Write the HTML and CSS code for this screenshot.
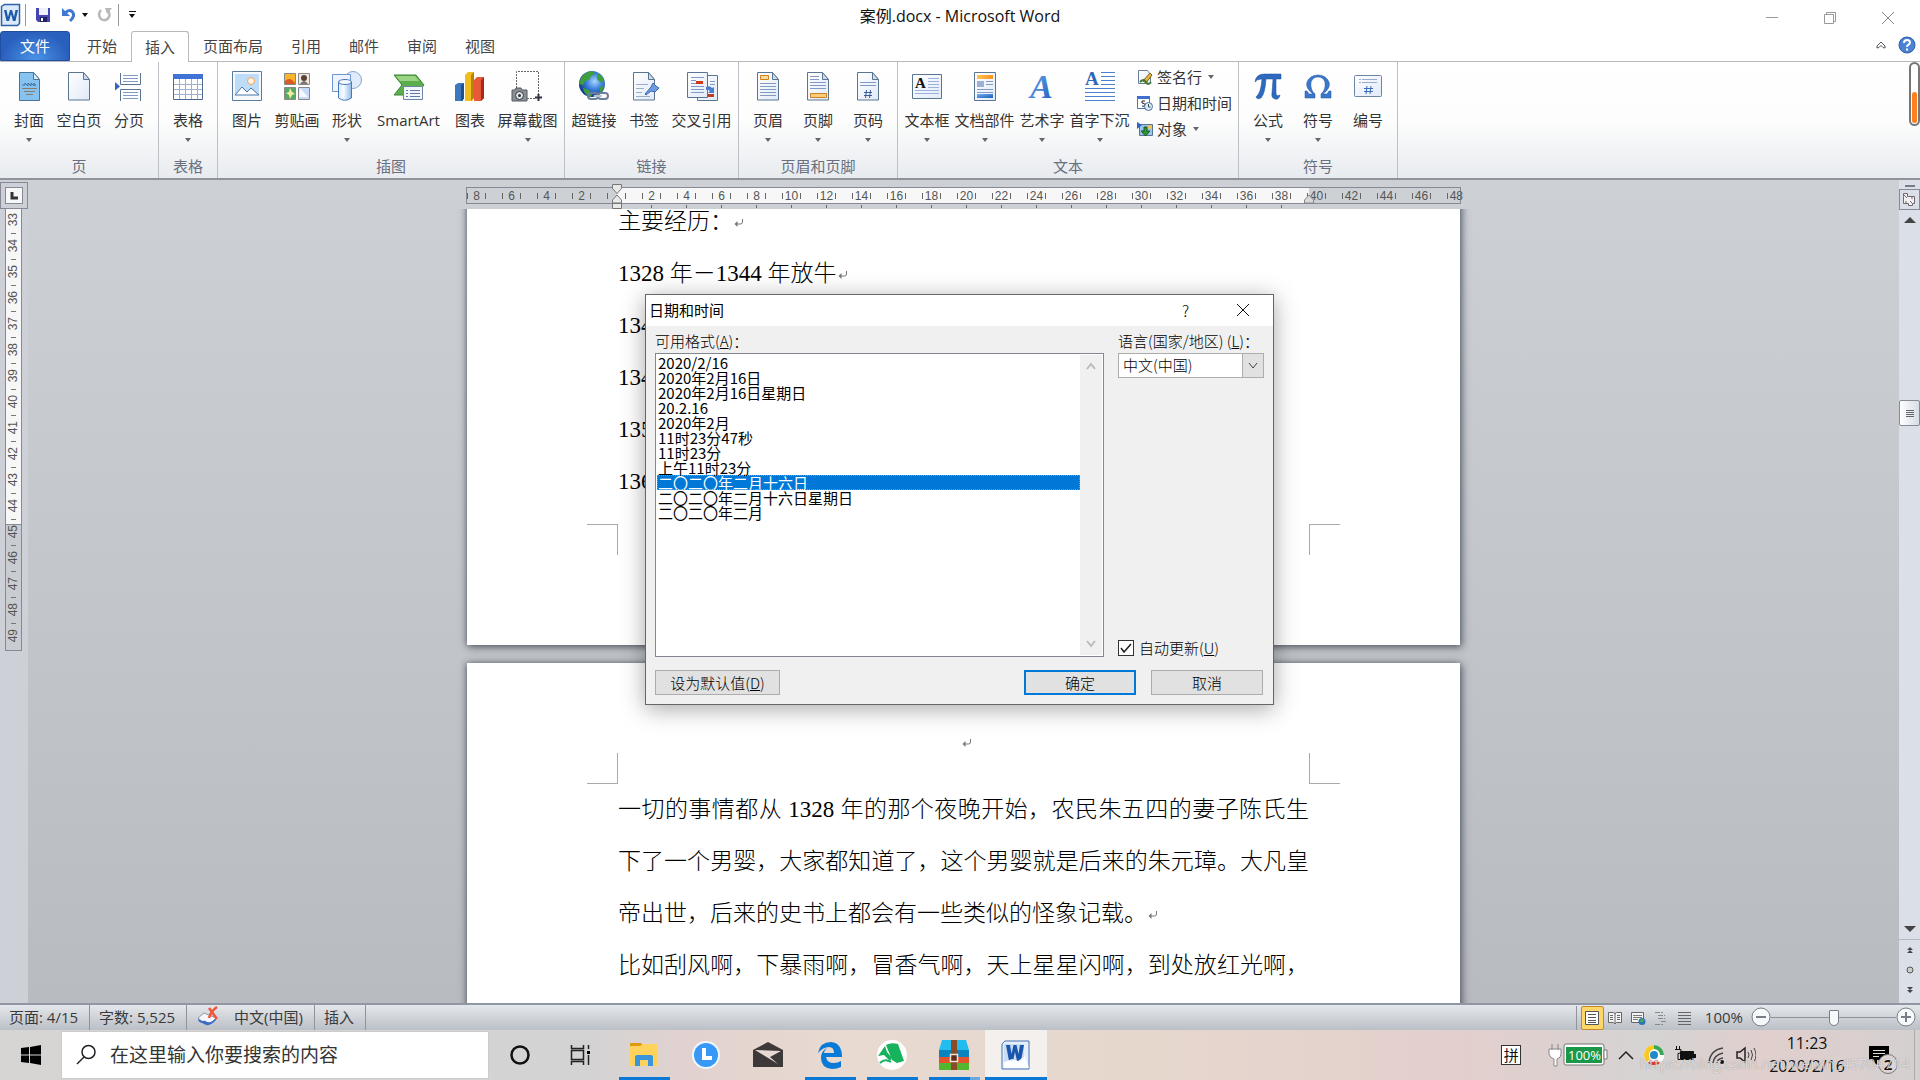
FILE: index.html
```html
<!DOCTYPE html>
<html lang="zh-CN">

<head>
    <meta charset="UTF-8" />
    <meta name="viewport" content="width=device-width, initial-scale=1" />
    <title>案例.docx - Microsoft Word</title>
    <link rel="stylesheet" href="styles.css">
</head>

<body>
    <!-- shared symbols -->
    <svg class="defs" aria-hidden="true">
        <defs>
            <linearGradient id="paper" x1="0" y1="0" x2="1" y2="1">
                <stop offset="0" stop-color="#fff" />
                <stop offset="1" stop-color="#e1eaf8" />
            </linearGradient>
            <linearGradient id="blue" x1="0" y1="0" x2="1" y2="1">
                <stop offset="0" stop-color="#6fb1f5" />
                <stop offset="1" stop-color="#1c5bb8" />
            </linearGradient>
            <linearGradient id="glass" x1="0" y1="0" x2="1" y2="0">
                <stop offset="0" stop-color="#d9eafb" />
                <stop offset=".4" stop-color="#f5fafe" />
                <stop offset="1" stop-color="#8fb9ea" />
            </linearGradient>
            <linearGradient id="orange" x1="0" y1="0" x2="1" y2="0">
                <stop offset="0" stop-color="#ffc24d" />
                <stop offset="1" stop-color="#f79224" />
            </linearGradient>
            <radialGradient id="sea" cx=".6" cy=".4" r=".6">
                <stop offset="0" stop-color="#a9d6ff" />
                <stop offset=".5" stop-color="#3d83dd" />
                <stop offset="1" stop-color="#123f8c" />
            </radialGradient>
            <symbol id="sheet" viewBox="0 0 32 32">
                <path d="M5.5 2.500h15l6 7v20.500h-21z" fill="url(#paper)" stroke="#5a7590" />
                <path d="M20.500 2.500v7h6z" fill="#cfdcec" stroke="#5a7590" />
            </symbol>
            <symbol id="mark" viewBox="0 0 12 12">
                <path d="M9.500 2v3q0 2-2 2H4" fill="none" stroke="#777" />
                <path d="M1.500 7l3-3v6z" fill="#777" />
            </symbol>
        </defs>
    </svg>

    <div class="app">
        <header class="titlebar">
            <div class="qat">
                <svg width="22" height="24" viewBox="0 0 22 24">
                    <path d="M1.500 3.500l3-2h15v19l-2 2h-16z" fill="#dbe9f8" stroke="#2b62a8" stroke-width="1.500" />
                    <path d="M4 7l2.500 11h2.500l2-7 2 7h2.500l2.500-11h-2.500l-1.500 7-2-7h-2l-2 7-1.500-7z" fill="#1c5aa8" />
                </svg>
                <i class="qat-sep"></i>
                <button class="qat-btn save" aria-label="保存">
                    <svg width="16" height="16" viewBox="0 0 16 16">
                        <path d="M1 1h14v14H3l-2-2z" fill="#4745b5" />
                        <path d="M4 1h9v7H4z" fill="#eef0fb" />
                        <path d="M5 10h7v5H5z" fill="#222063" />
                        <path d="M6 11h2v3H6z" fill="#fff" />
                    </svg>
                </button>
                <button class="qat-btn" aria-label="撤消">
                    <svg width="16" height="16" viewBox="0 0 16 16">
                        <path d="M1 1v8h8z" fill="#3f79cf" />
                        <path d="M4 6q4-4 7-1.500 4 4-2 9.500" fill="none" stroke="#3f79cf" stroke-width="3" />
                    </svg>
                </button>
                <i class="caret dark"></i>
                <button class="qat-btn redo" aria-label="重复">
                    <svg width="16" height="16" viewBox="0 0 16 16">
                        <path d="M4 3q-4 5 0 9 4 2.500 7-.5 3-4 0-8" fill="none" stroke="#b9b9b9" stroke-width="2.500" />
                        <path d="M8 1h7l-5 6z" fill="#b9b9b9" />
                    </svg>
                </button>
                <i class="qat-sep"></i>
                <button class="qat-btn more" aria-label="自定义快速访问工具栏"><i class="bar"></i><i class="caret dark"></i></button>
            </div>
            <h1>案例.docx - Microsoft Word</h1>
            <div class="win-btns">
                <button aria-label="最小化"><svg width="14" height="14" viewBox="0 0 14 14"><path d="M1 6.500h12" stroke="#999" /></svg></button>
                <button aria-label="还原"><svg width="14" height="14" viewBox="0 0 14 14"><path d="M3.500 3V1.500h9v9H11M1.500 3.500h9v9h-9z" fill="none" stroke="#999" /></svg></button>
                <button aria-label="关闭"><svg width="14" height="14" viewBox="0 0 14 14"><path d="M1 1l12 12M13 1L1 13" stroke="#888" /></svg></button>
            </div>
        </header>

        <nav class="tabs">
            <button class="tab file">文件</button>
            <button class="tab">开始</button>
            <button class="tab active">插入</button>
            <button class="tab">页面布局</button>
            <button class="tab">引用</button>
            <button class="tab">邮件</button>
            <button class="tab">审阅</button>
            <button class="tab">视图</button>
            <div class="tab-tools">
                <svg width="10" height="10" viewBox="0 0 10 10"><path d="M1 6l4-4 4 4v2l-2-.5-2-2-2 2-2 .5z" fill="#fff" stroke="#555" /></svg>
                <svg width="18" height="18" viewBox="0 0 18 18">
                    <circle cx="9" cy="9" r="8" fill="#4a82d4" stroke="#2d5da8" />
                    <path d="M6 7q0-3 3-3t3 2.500q0 1.500-2 2.500-1 .6-1 2M9 12.500v2" fill="none" stroke="#fff" stroke-width="2" />
                </svg>
            </div>
        </nav>

        <section class="ribbon">
            <div class="group">
                <div class="tools">
                    <button class="tool">
                        <svg viewBox="0 0 32 32">
                            <path d="M6.500 2.500h14l6 7v21h-20z" fill="#86c3f0" stroke="#4b7396" />
                            <path d="M20.500 2.500v7h6z" fill="#dcebf8" stroke="#4b7396" />
                            <path d="M9 15h3v-2l3 3v-3l3 3v-3l3 3v-3l2 3" fill="none" stroke="#3f6f99" />
                            <path d="M9 18.500h15M11 21.500h11M13 24.500h7" stroke="#8a7a6a" />
                        </svg>
                        <span>封面</span><i class="caret"></i>
                    </button>
                    <button class="tool"><svg viewBox="0 0 32 32"><use href="#sheet" /></svg><span>空白页</span></button>
                    <button class="tool">
                        <svg viewBox="0 0 32 32">
                            <path d="M7.500 3v11.500h20V3M7.500 31V19.500h20V31" fill="#fff" stroke="#5a7590" />
                            <path d="M10 5.500h15M10 8.500h15M10 11.500h15M10 22.500h15M10 25.500h15M10 28.500h15" stroke="#8299c4" />
                            <path d="M2 12l5 4.500-5 4z" fill="#3364c4" />
                        </svg>
                        <span>分页</span>
                    </button>
                </div>
                <h2>页</h2>
            </div>
            <div class="group">
                <div class="tools">
                    <button class="tool">
                        <svg viewBox="0 0 32 32">
                            <path d="M1.500 4.500h29v25h-29z" fill="#fff" stroke="#4a6a92" />
                            <path d="M1 4h30v5H1z" fill="#3f73d6" />
                            <path d="M7.500 9v20M13.500 9v20M19.500 9v20M25.500 9v20M2 14.500h28M2 19.500h28M2 24.500h28" stroke="#9db0cc" />
                        </svg>
                        <span>表格</span><i class="caret"></i>
                    </button>
                </div>
                <h2>表格</h2>
            </div>
            <div class="group">
                <div class="tools">
                    <button class="tool">
                        <svg viewBox="0 0 32 32">
                            <path d="M1.500 1.500h29v29h-29z" fill="#f5f9fd" stroke="#5a7c9c" />
                            <path d="M4 4h24v21H4z" fill="#bcdcf8" />
                            <circle cx="20" cy="11" r="3.500" fill="#fff2df" stroke="#f2a25a" />
                            <path d="M4 25l7-8 5 5 4-4 8 7z" fill="#fff" stroke="#4674a8" />
                        </svg>
                        <span>图片</span>
                    </button>
                    <button class="tool">
                        <svg viewBox="0 0 32 32">
                            <path d="M3.500 3.500h11v11h-11z" fill="#f8b62c" stroke="#888" />
                            <path d="M4 11q5-5 10 2v1H4z" fill="#dc5a20" />
                            <path d="M17.500 3.500h11v11h-11z" fill="#f0e8df" stroke="#888" />
                            <circle cx="23" cy="8" r="3" fill="#5b4236" />
                            <path d="M19 14q4-6 8 0z" fill="#777" />
                            <path d="M3.500 17.500h11v12h-11z" fill="#58a868" stroke="#888" />
                            <path d="M5 23l3-1 1-4 2 4 3 2-3 1-2 4-1-4z" fill="#f4ee9b" />
                            <path d="M17.500 17.500h11v12h-11z" fill="#c8dafa" stroke="#888" />
                            <path d="M19 18l8 9H18z" fill="#f6faff" />
                        </svg>
                        <span>剪贴画</span>
                    </button>
                    <button class="tool">
                        <svg viewBox="0 0 32 32">
                            <circle cx="22" cy="10" r="8.500" fill="#dfeafa" stroke="#8aa6d2" />
                            <path d="M1.500 4.500h18v17h-18z" fill="#eef4fd" stroke="#6d94cc" />
                            <path d="M7.500 12v16q6 4.500 13 0V12z" fill="url(#glass)" stroke="#4878b8" />
                            <ellipse cx="14" cy="12" rx="6.500" ry="2.500" fill="#f4f9ff" stroke="#4878b8" />
                        </svg>
                        <span>形状</span><i class="caret"></i>
                    </button>
                    <button class="tool smart">
                        <svg viewBox="0 0 32 32">
                            <path d="M1 5h22l8 10-8 10H1l8-10z" fill="#5cae4c" stroke="#3d8636" />
                            <path d="M3 6h19l4 5H7z" fill="#9bd584" />
                            <path d="M10.500 16.500h19v13h-19z" fill="#f3f7fc" stroke="#6b86a4" />
                            <path d="M13 20.500h2M17 20.500h10M13 23.500h2M17 23.500h10M13 26.500h2M17 26.500h10" stroke="#5d7ba8" />
                        </svg>
                        <span>SmartArt</span>
                    </button>
                    <button class="tool">
                        <svg viewBox="0 0 32 32">
                            <path d="M1 15l3-2h6l-1 2v16H1z" fill="#3c78bd" />
                            <path d="M7 15l3-2v16l-3 2z" fill="#1f4f8c" />
                            <path d="M11 5l3-3h6v26l-2 3h-7z" fill="#f0bd1e" />
                            <path d="M17 5l3-3v26l-3 3z" fill="#b98305" />
                            <path d="M20 10l3-3h7v21l-3 3h-7z" fill="#e8593a" />
                            <path d="M27 10l3-3v21l-3 3z" fill="#a52c1a" />
                        </svg>
                        <span>图表</span>
                    </button>
                    <button class="tool wide">
                        <svg viewBox="0 0 32 32">
                            <path d="M4.500 18V1.500h22V24M15 28.500h8" fill="none" stroke="#666" stroke-dasharray="2 1" />
                            <path d="M23 27.500h7M26.500 24v7" stroke="#334" stroke-width="2" />
                            <path d="M0 20h3l1-2h5l1 2h5v11H0z" fill="#8b9096" stroke="#555a60" />
                            <circle cx="7.500" cy="25.500" r="4" fill="#dfe5eb" stroke="#333" />
                            <circle cx="7.500" cy="25.500" r="1.500" fill="#333" />
                        </svg>
                        <span>屏幕截图</span><i class="caret"></i>
                    </button>
                </div>
                <h2>插图</h2>
            </div>
            <div class="group">
                <div class="tools">
                    <button class="tool">
                        <svg viewBox="0 0 32 32">
                            <circle cx="14" cy="14" r="13" fill="url(#sea)" />
                            <path d="M3 8q4-6 11-7l3 3-4 2-2 4-4 1-2 4-4-1zM19 3q5 2 7 7l-3 3-4-4zM5 18l6 2 3 5-2 2q-6-3-7-9zM22 17l4-1q-1 5-4 7z" fill="#3fa03b" />
                            <rect x="10" y="23" width="10" height="6" rx="3" fill="none" stroke="#6d7f98" stroke-width="2" />
                            <rect x="20" y="23" width="10" height="6" rx="3" fill="none" stroke="#6d7f98" stroke-width="2" />
                            <path d="M16 26h8" stroke="#b9c6d8" stroke-width="2" />
                        </svg>
                        <span>超链接</span>
                    </button>
                    <button class="tool">
                        <svg viewBox="0 0 32 32">
                            <use href="#sheet" />
                            <path d="M8 14.500h12M8 18.500h8M8 22.500h6M8 26.500h14" stroke="#9aaccc" />
                            <path d="M17 24l6-7 2-4 3 3 3 2-4 4-4-1-5 4z" fill="#6d9be0" stroke="#3d68b0" />
                        </svg>
                        <span>书签</span>
                    </button>
                    <button class="tool wide">
                        <svg viewBox="0 0 32 32">
                            <path d="M11.500 5.500h20v25h-20z" fill="url(#paper)" stroke="#5a7590" />
                            <path d="M21 24h7v3h-7z" fill="#c23a1c" />
                            <path d="M1.500 2.500h20v25h-20z" fill="url(#paper)" stroke="#5a7590" />
                            <path d="M5 7.500h13M5 10.500h5M5 13.500h5M5 16.500h13M5 19.500h13M5 22.500h13M24 11.500h5M24 14.500h5" stroke="#8299c4" />
                            <path d="M10 11h7v3h-7z" fill="#d4361c" />
                            <path d="M20 17q4-2 6 1l2-1v6h-6l2-2q-2-2-4-1z" fill="#4a7fd0" />
                        </svg>
                        <span>交叉引用</span>
                    </button>
                </div>
                <h2>链接</h2>
            </div>
            <div class="group">
                <div class="tools">
                    <button class="tool">
                        <svg viewBox="0 0 32 32">
                            <use href="#sheet" />
                            <path d="M8.500 5.500h8v4h-8z" fill="#fbdc9a" stroke="#d08020" />
                            <path d="M8 13.500h16M8 16.500h16M8 19.500h16M8 22.500h16M8 25.500h16" stroke="#8299c4" />
                        </svg>
                        <span>页眉</span><i class="caret"></i>
                    </button>
                    <button class="tool">
                        <svg viewBox="0 0 32 32">
                            <use href="#sheet" />
                            <path d="M8.500 23.500h16v4h-16z" fill="#fbcf7a" stroke="#d08020" />
                            <path d="M8 6.500h9M8 9.500h9M8 12.500h16M8 15.500h16M8 18.500h16" stroke="#8299c4" />
                        </svg>
                        <span>页脚</span><i class="caret"></i>
                    </button>
                    <button class="tool">
                        <svg viewBox="0 0 32 32">
                            <use href="#sheet" />
                            <path d="M8 12.500h16M8 15.500h16" stroke="#8299c4" />
                            <path d="M14.500 20l-1 8M18.500 20l-1 8M12 22.500h8M12 25.500h8" stroke="#3c5c9c" />
                        </svg>
                        <span>页码</span><i class="caret"></i>
                    </button>
                </div>
                <h2>页眉和页脚</h2>
            </div>
            <div class="group">
                <div class="tools">
                    <button class="tool">
                        <svg viewBox="0 0 32 32">
                            <path d="M1.500 4.500h29v24h-29z" fill="url(#paper)" stroke="#5a7590" />
                            <path d="M17 8.500h11M17 11.500h11M17 14.500h11M17 17.500h11M4 20.500h24M4 23.500h24" stroke="#9bb2dc" />
                            <text x="4" y="18" class="ic-a" font-size="15" fill="#111">A</text>
                        </svg>
                        <span>文本框</span><i class="caret"></i>
                    </button>
                    <button class="tool wide">
                        <svg viewBox="0 0 32 32">
                            <path d="M5.500 2.500h21v28h-21z" fill="url(#paper)" stroke="#5a7590" />
                            <path d="M8 5h16v4H8z" fill="url(#orange)" />
                            <path d="M8 11h7v6H8z" fill="#9bb0d4" />
                            <path d="M17 11.500h7M17 14.500h7M8 19.500h16M8 22.500h16" stroke="#8299c4" />
                            <path d="M8 24h16v4H8z" fill="url(#blue)" />
                        </svg>
                        <span>文档部件</span><i class="caret"></i>
                    </button>
                    <button class="tool">
                        <svg viewBox="0 0 32 32"><text x="4" y="28" class="ic-a slant" font-size="34" fill="url(#blue)">A</text></svg>
                        <span>艺术字</span><i class="caret"></i>
                    </button>
                    <button class="tool wide">
                        <svg viewBox="0 0 32 32">
                            <text x="1" y="15" class="ic-a" font-size="19" fill="#2f66b8">A</text>
                            <path d="M17 2.500h14M17 6.500h14M17 10.500h14M17 14.500h14M1 18.500h30M1 22.500h30M1 26.500h30M1 30.500h30" stroke="#4a80d0" />
                        </svg>
                        <span>首字下沉</span><i class="caret"></i>
                    </button>
                    <div class="small-tools">
                        <button class="small-tool">
                            <svg viewBox="0 0 16 16">
                                <path d="M1.500 1.500h9l3 4v9h-12z" fill="url(#paper)" stroke="#6c7f98" />
                                <path d="M6 12l7-8 2 2-6 8z" fill="#e9b938" stroke="#7b5a18" />
                                <path d="M3 13q4-4 6 0t5 0" fill="none" stroke="#3f7a37" stroke-width="2" />
                            </svg>
                            <span>签名行</span><i class="caret"></i>
                        </button>
                        <button class="small-tool">
                            <svg viewBox="0 0 16 16">
                                <path d="M.5 1.500h12v12H.5z" fill="#fff" stroke="#5373b0" />
                                <path d="M0 1h13v3H0z" fill="#3d6fce" />
                                <path d="M8 6H5v2q3 0 3 2t-3 1" fill="none" stroke="#222" />
                                <circle cx="11.500" cy="11.500" r="4" fill="#dbe9fa" stroke="#54709c" />
                                <path d="M11.500 9v3h2" fill="none" stroke="#355" />
                            </svg>
                            <span>日期和时间</span>
                        </button>
                        <button class="small-tool">
                            <svg viewBox="0 0 16 16">
                                <path d="M2.500 3.500h13v11h-13z" fill="#9cc6ee" stroke="#587396" />
                                <path d="M0 1l5 3-5 4z" fill="#2f62c4" />
                                <circle cx="13" cy="6" r="2" fill="#f8c24a" />
                                <path d="M7 6h3v4h3l-4.500 5L4 10h3z" fill="#2f9236" stroke="#175c1d" />
                            </svg>
                            <span>对象</span><i class="caret"></i>
                        </button>
                    </div>
                </div>
                <h2>文本</h2>
            </div>
            <div class="group">
                <div class="tools">
                    <button class="tool">
                        <svg viewBox="0 0 32 32">
                            <path d="M3 12q1-8 9-8h17v5h-5v14q0 4 4 2-1 5-5 4-4-1-3-6l1-14h-7q-1 15-5 19-4 2-5-1 5-4 6-18-5 0-7 3z" fill="#2d6abf" stroke="#1d4f9a" stroke-width=".5" />
                        </svg>
                        <span>公式</span><i class="caret"></i>
                    </button>
                    <button class="tool">
                        <svg viewBox="0 0 32 32">
                            <path d="M3 21h2l2 3h4Q3 18 5 12q3-7 11-7t11 7q2 6-6 12h4l2-3h2v7H19v-4q5-4 4-12-2-5-7-5t-7 5q-1 8 4 12v4H3z" fill="#3b78cc" stroke="#1d4f9a" stroke-width=".5" />
                        </svg>
                        <span>符号</span><i class="caret"></i>
                    </button>
                    <button class="tool">
                        <svg viewBox="0 0 32 32">
                            <rect x="2.500" y="5.500" width="27" height="21" rx="1" fill="url(#paper)" stroke="#6b86a4" />
                            <path d="M7 9.500h2M10 9.500h15M7 12.500h2M10 12.500h15" stroke="#9aaccc" />
                            <path d="M15 16l-1 8M19 16l-1 8M12 18.500h9M12 21.500h9" stroke="#3c6cbc" />
                        </svg>
                        <span>编号</span>
                    </button>
                </div>
                <h2>符号</h2>
            </div>
            <div class="gauge"><i></i></div>
        </section>

        <main class="workspace">
            <aside class="left-rail">
                <div class="tab-stop"><span><svg width="8" height="8" viewBox="0 0 8 8"><path d="M2 0v6h6" fill="none" stroke="#333" stroke-width="3" /></svg></span></div>
                <div class="v-ruler">
                    <span>33</span><span>34</span><span>35</span><span>36</span><span>37</span><span>38</span><span>39</span><span>40</span><span>41</span><span>42</span><span>43</span><span>44</span><span>45</span><span>46</span><span>47</span><span>48</span><span>49</span>
                </div>
            </aside>

            <div class="canvas">
                <div class="ruler-row">
                    <div class="h-ruler">
                        <span>8</span><span>6</span><span>4</span><span>2</span><span></span><span>2</span><span>4</span><span>6</span><span>8</span><span>10</span><span>12</span><span>14</span><span>16</span><span>18</span><span>20</span><span>22</span><span>24</span><span>26</span><span>28</span><span>30</span><span>32</span><span>34</span><span>36</span><span>38</span><span>40</span><span>42</span><span>44</span><span>46</span><span>48</span>
                    </div>
                    <div class="ruler-ticks"></div>
                    <svg class="indent-left" width="12" height="26" viewBox="0 0 12 26">
                        <path d="M1.500 1.500h9v4l-4.500 5-4.500-5zM6 12l4.500 5v3h-9v-3zM1.500 20.500h9v5h-9z" fill="#e9e9e9" stroke="#777" />
                    </svg>
                    <svg class="indent-right" width="12" height="26" viewBox="0 0 12 26">
                        <path d="M6 12l4.500 5v3h-9v-3z" fill="#d9d9d9" stroke="#888" />
                    </svg>
                </div>
                <div class="pages">
                    <article class="page page-one">
                        <p>主要经历：<svg class="mark"><use href="#mark" /></svg></p>
                        <p>1328 年－1344 年放牛<svg class="mark"><use href="#mark" /></svg></p>
                        <p>134</p>
                        <p>134</p>
                        <p>135</p>
                        <p>136</p>
                        <div class="corners bottom"><i></i><i></i></div>
                    </article>
                    <article class="page page-two">
                        <div class="page-head"><svg class="mark"><use href="#mark" /></svg></div>
                        <div class="corners top"><i></i><i></i></div>
                        <p class="full">一切的事情都从 1328 年的那个夜晚开始，农民朱五四的妻子陈氏生</p>
                        <p class="full">下了一个男婴，大家都知道了，这个男婴就是后来的朱元璋。大凡皇</p>
                        <p>帝出世，后来的史书上都会有一些类似的怪象记载。<svg class="mark"><use href="#mark" /></svg></p>
                        <p class="full">比如刮风啊，下暴雨啊，冒香气啊，天上星星闪啊，到处放红光啊，</p>
                    </article>
                </div>
            </div>

            <aside class="scroll">
                <i class="split"></i>
                <button class="ruler-toggle" aria-label="标尺">
                    <svg width="15" height="15" viewBox="0 0 15 15"><path d="M1.500 4.500V1.500h4v3h7v7h-2v2h-4v-2h-5z" fill="#f4f0f2" stroke="#6f6870" /><path d="M2 3l3 3M8 9l2 2M10 5v2M4 9v2" stroke="#6f6870" /></svg>
                </button>
                <button aria-label="向上滚动"><svg width="12" height="6"><path d="M0 6l6-6 6 6z" fill="#444" /></svg></button>
                <div class="track"><div class="thumb"><i></i><i></i><i></i><i></i></div></div>
                <button aria-label="向下滚动"><svg width="12" height="6"><path d="M0 0l6 6 6-6z" fill="#444" /></svg></button>
                <div class="browse">
                    <svg width="8" height="8"><path d="M1 4l3-3 3 3zM1 7l3-3 3 3z" fill="#444" /></svg>
                    <svg width="8" height="8"><circle cx="4" cy="4" r="3" fill="#ccc" stroke="#555" /></svg>
                    <svg width="8" height="8"><path d="M1 1h6L4 4zM1 4h6L4 7z" fill="#444" /></svg>
                </div>
            </aside>
        </main>

        <footer class="status">
            <span class="stat">页面: 4/15</span>
            <span class="stat">字数: 5,525</span>
            <span class="stat lang">
                <svg width="24" height="22" viewBox="0 0 24 22">
                    <path d="M2 12l6-5 12 5-6 6q-3-3-6-1z" fill="#f5f7fb" stroke="#8c96a8" />
                    <path d="M2 13q0 3 4 4l4 2q5 1 10-5v-2q-4 5-9 4-2-2-5-1z" fill="#3c6cc4" />
                    <path d="M13 2l8 11M21 1q-6 4-8 11" stroke="#f0553a" stroke-width="2.500" fill="none" />
                </svg>
                中文(中国)
            </span>
            <span class="stat">插入</span>
            <div class="views">
                <button class="view on" aria-label="页面视图"><svg viewBox="0 0 16 16"><path d="M1.500 1.500h13v13h-13z" fill="#fff" stroke="#555" /><path d="M4 4.500h8M4 7.500h8M4 10.500h8M4 12.500h8" stroke="#555" /></svg></button>
                <button class="view" aria-label="阅读版式"><svg viewBox="0 0 16 16"><path d="M1.500 2.500h5l1.500 1 1.500-1h5v10h-5L8 14l-1.500-1.500h-5z" fill="#f4f4f4" stroke="#666" /><path d="M8 3v10M3 5.500h3M3 7.500h3M3 9.500h3M10 5.500h3M10 7.500h3M10 9.500h3" stroke="#666" /></svg></button>
                <button class="view" aria-label="Web 版式"><svg viewBox="0 0 16 16"><path d="M1.500 2.500h12v10h-12z" fill="#f4f4f4" stroke="#666" /><path d="M3 5.500h9M3 7.500h9M3 9.500h5" stroke="#777" /><circle cx="12" cy="11.500" r="3.500" fill="#2c74b8" /><path d="M10 10l3-1 1 2-3 2z" fill="#4eaa4a" /></svg></button>
                <button class="view" aria-label="大纲"><svg viewBox="0 0 16 16"><path d="M2 2.500h8M5 5.500h7M5 8.500h7M8 11.500h6M2 14.500h8" stroke="#888" stroke-dasharray="5 1" /></svg></button>
                <button class="view" aria-label="草稿"><svg viewBox="0 0 16 16"><path d="M2 2.500h13M2 5.500h13M2 8.500h13M2 11.500h13M2 14.500h13" stroke="#666" /></svg></button>
            </div>
            <label class="zoom-label" for="zoom">100%</label>
            <button class="round" aria-label="缩小"><svg width="20" height="20"><circle cx="10" cy="10" r="9" fill="#f7f8fa" stroke="#777e88" /><path d="M5 10h10" stroke="#777e88" stroke-width="2" /></svg></button>
            <input type="range" id="zoom" min="0" max="100" value="50">
            <button class="round" aria-label="放大"><svg width="20" height="20"><circle cx="10" cy="10" r="9" fill="#f7f8fa" stroke="#777e88" /><path d="M5 10h10M10 5v10" stroke="#777e88" stroke-width="2" /></svg></button>
        </footer>

        <div class="taskbar">
            <button class="start" aria-label="开始"><svg width="20" height="20" viewBox="0 0 20 20"><path d="M0 3l8-1v7.500H0zM9 2l11-2v9.500H9zM0 10.500h8V18l-8-1zM9 10.500h11V20L9 18z" /></svg></button>
            <label class="search">
                <svg width="22" height="22" viewBox="0 0 22 22"><circle cx="13.500" cy="8" r="6.500" fill="none" stroke="#222" stroke-width="1.500" /><path d="M9 13l-7 7" stroke="#222" stroke-width="1.500" /></svg>
                <input type="text" placeholder="在这里输入你要搜索的内容" aria-label="搜索">
            </label>
            <button class="app-btn" aria-label="Cortana"><svg viewBox="0 0 30 30"><circle cx="15" cy="15" r="8.500" fill="none" stroke="#111" stroke-width="2.500" /></svg></button>
            <button class="app-btn" aria-label="任务视图"><svg viewBox="0 0 30 30"><path d="M4.500 5v3.500h12V5M4.500 10.500h12v9h-12zM4.500 25v-3.500h12V25M21.500 5v4M21.500 15v10" fill="none" stroke="#222" stroke-width="1.500" /><path d="M20 11h3v3h-3z" /></svg></button>
            <button class="app-btn open" aria-label="资源管理器"><svg viewBox="0 0 30 30"><path d="M1 4q0-1 1-1h10l2 3H1z" fill="#dd9a0c" /><path d="M1 6h10l3-2h14v22H1z" fill="#ffd25c" /><path d="M6 26v-9q0-2 2-2h14q2 0 2 2v9h-5v-6h-8v6z" fill="#3a96dc" /></svg></button>
            <button class="app-btn" aria-label="时钟"><svg viewBox="0 0 30 30"><circle cx="15" cy="15" r="14" fill="#eef6ff" /><circle cx="15" cy="15" r="12" fill="#3798f5" /><path d="M13 8v10h8" fill="none" stroke="#fff" stroke-width="4" /></svg></button>
            <button class="app-btn" aria-label="邮件"><svg viewBox="0 0 30 30"><path d="M0 10l15-8 15 8v17H0z" fill="#3d3938" /><path d="M2 10l26 1-11 6 8 7z" fill="#e6d8d2" /></svg></button>
            <button class="app-btn open" aria-label="Edge"><svg viewBox="0 0 30 30"><path d="M3 13Q5 2 16 2q11 1 11 15H11q1 6 8 6 4 0 7-2v6q-4 2-9 2-11-1-11-11 0-7 6-10-3 3-3 5h10q0-6-5-6-6 0-11 6z" fill="#0a7ad8" /></svg></button>
            <button class="app-btn open" aria-label="浏览器"><svg viewBox="0 0 30 30"><circle cx="15" cy="15" r="15" fill="#fff" /><path d="M9 5q5-3 12-1l6 17-7 2-5-3z" fill="#16b25c" /><path d="M8 6L1 16l6-1 6 6 2-3-5-6z" fill="#16b25c" /><path d="M3 23q5-5 11-1" fill="none" stroke="#16b25c" stroke-width="2" /></svg></button>
            <button class="app-btn open stacked" aria-label="压缩软件"><svg viewBox="0 0 30 30"><path d="M3 0h24l3 10H0z" fill="#22bdf0" /><path d="M0 10h30v7H0z" fill="#0d83bd" /><path d="M0 17h30v6H0z" fill="#e1542d" /><path d="M0 23h30v7H0z" fill="#52b62e" /><path d="M12 0h6v30h-6z" fill="#8a4b25" /><path d="M11.500 14.500h7v7h-7z" fill="#5a2e18" stroke="#f4e3d3" stroke-width="1.500" /></svg></button>
            <button class="app-btn open current" aria-label="Word"><svg viewBox="0 0 30 30"><path d="M1 4l3-3h24v28H1z" fill="#e6effa" stroke="#4774b4" /><path d="M3 4h20v18H3z" fill="#c9dcf3" /><path d="M5 5l3 16h4l2-9 2 9h4l3-16h-4l-1.500 9-2-9h-3l-2 9-1.500-9z" fill="#1b56ac" /><path d="M3 22l8-3 6 2 7-5 4 12H3z" fill="#fff" opacity=".9" /></svg></button>

            <div class="tray">
                <span class="ime">拼</span>
                <svg class="power" width="60" height="24" viewBox="0 0 60 24">
                    <path d="M4 1v6M10 1v6M1 6h12v5q0 4-4 5v7H6v-7q-4-1-5-5z" fill="#fff" stroke="#888" />
                    <rect x="16" y="1" width="40" height="21" rx="2" fill="#fff" stroke="#777" />
                    <path d="M56 7h3v9h-3z" fill="#fff" stroke="#777" />
                    <path d="M18 4h36v16H18z" fill="#1a9848" />
                    <text x="20" y="17" font-size="13" fill="#fff">100%</text>
                </svg>
                <svg class="chev" width="16" height="16" viewBox="0 0 16 16"><path d="M1 12l7-7 7 7" fill="none" stroke="#222" stroke-width="1.500" /></svg>
                <svg width="20" height="20" viewBox="0 0 20 20"><circle cx="10" cy="10" r="10" fill="#fff" /><path d="M10 0a10 10 0 0 1 10 10h-4a6 6 0 0 0-6-6z" fill="#3aa757" /><path d="M20 10a10 10 0 0 1-4 8l-3-3q3-2 3-5z" fill="#fff" /><path d="M4 18a10 10 0 0 0 12 0l-3-3q-4 2-7 0z" fill="#e33b2e" /><path d="M3 17A10 10 0 0 1 10 0v4q-7 2-4 10z" fill="#f9c922" /><circle cx="10" cy="10" r="4" fill="#1e88c8" /></svg>
                <svg width="22" height="20" viewBox="0 0 22 20"><path d="M6.500 6.500h13v8h-13z" fill="#111" stroke="#111" /><path d="M20 9h2v4h-2z" fill="#111" /><path d="M2.500 1v3M5.500 1v3M1 4.500h6v2q0 2-3 2v6h2" fill="none" stroke="#111" /></svg>
                <svg width="20" height="20" viewBox="0 0 20 20"><path d="M3 18Q4 5 17 3M7 18q1-8 10-10M11 18q0-4 6-5" fill="none" stroke="#444" stroke-width="1.500" /><circle cx="16" cy="17" r="2" fill="#111" /></svg>
                <svg width="20" height="20" viewBox="0 0 20 20"><path d="M1 7h3l5-4v14l-5-4H1z" fill="none" stroke="#222" stroke-width="1.500" /><path d="M12 7q2 3 0 6M15 5q3 5 0 10M18 3q4 7 0 14" fill="none" stroke="#444" /></svg>
                <div class="clock"><span>11:23</span><span>2020/2/16</span></div>
                <div class="notice">
                    <svg width="20" height="20" viewBox="0 0 20 20"><path d="M0 1h20v14H8v5l-5-5H0z" fill="#000" /><path d="M4 5.500h12M4 8.500h12M4 11.500h6" stroke="#ddd" /></svg>
                    <b>2</b>
                </div>
                <i class="show-desktop"></i>
            </div>
            <span class="watermark">https://blog.csdn.net/weixin_45704714</span>
        </div>

        <!-- date and time window -->
        <form class="dialog" role="dialog" aria-labelledby="dlgTitle">
            <div class="dialog-title">
                <h2 id="dlgTitle">日期和时间</h2>
                <button type="button" aria-label="帮助">?</button>
                <button type="button" aria-label="关闭"><svg width="14" height="14" viewBox="0 0 14 14"><path d="M1 1l12 12M13 1L1 13" stroke="#111" /></svg></button>
            </div>
            <div class="dialog-body">
                <div class="formats">
                    <div class="field-label" id="fmtLabel">可用格式(<u>A</u>)：</div>
                    <div class="listbox">
                        <ul role="listbox" aria-labelledby="fmtLabel">
                            <li role="option">2020/2/16</li>
                            <li role="option">2020年2月16日</li>
                            <li role="option">2020年2月16日星期日</li>
                            <li role="option">20.2.16</li>
                            <li role="option">2020年2月</li>
                            <li role="option">11时23分47秒</li>
                            <li role="option">11时23分</li>
                            <li role="option">上午11时23分</li>
                            <li role="option" class="selected" aria-selected="true">二〇二〇年二月十六日</li>
                            <li role="option">二〇二〇年二月十六日星期日</li>
                            <li role="option">二〇二〇年二月</li>
                        </ul>
                        <div class="list-scroll">
                            <svg width="10" height="8"><path d="M1 7l4-5 4 5" fill="none" stroke="#bbb" stroke-width="2" /></svg>
                            <svg width="10" height="8"><path d="M1 1l4 5 4-5" fill="none" stroke="#bbb" stroke-width="2" /></svg>
                        </div>
                    </div>
                </div>
                <div class="options">
                    <label class="field-label" for="language">语言(国家/地区) (<u>L</u>)：</label>
                    <div class="combo">
                        <select id="language">
                            <option>中文(中国)</option>
                        </select>
                        <span class="combo-arrow"><svg width="10" height="6"><path d="M1 0l4 5 4-5" fill="none" stroke="#444" /></svg></span>
                    </div>
                    <label class="check"><input type="checkbox" checked><span>自动更新(<u>U</u>)</span></label>
                </div>
            </div>
            <div class="dialog-btns">
                <button type="button" class="btn set-default">设为默认值(<u>D</u>)</button>
                <button type="button" class="btn ok">确定</button>
                <button type="button" class="btn">取消</button>
            </div>
        </form>
    </div>
</body>

</html>
```
FILE: styles.css
```css
* {
    box-sizing: border-box;
}

body {
    margin: 0;
    font-family: "Open Sans", "Noto Sans CJK SC", sans-serif;
    font-size: 15px;
    color: #333;
    overflow: hidden;
}

h1,
h2,
p,
ul {
    margin: 0;
    padding: 0;
    font-weight: 400;
    font-size: 15px;
}

button {
    font: inherit;
    color: inherit;
    background: none;
    border: 0;
    padding: 0;
    white-space: nowrap;
}

svg {
    display: block;
    flex: none;
}

.defs {
    position: absolute;
    width: 0;
    height: 0;
}

.app {
    position: relative;
    display: flex;
    flex-direction: column;
    height: 100vh;
    background: #fff;
}

.caret {
    width: 0;
    height: 0;
    border: 3px solid transparent;
    border-top: 4px solid #666;
    border-bottom: 0;
}

.caret.dark {
    border-top-color: #111;
}

/* title bar */
.titlebar {
    display: grid;
    grid-template-columns: 1fr auto 1fr;
    align-items: center;
    height: 31px;
    flex: none;
    padding-bottom: 2px;
}

.titlebar h1 {
    color: #111;
    font-size: 16px;
}

.qat {
    display: flex;
    align-items: center;
    gap: 3px;
}

.qat-sep {
    width: 1px;
    height: 22px;
    background: #999;
}

.qat-btn {
    width: 20px;
    display: flex;
    flex-direction: column;
    align-items: center;
    gap: 2px;
}

.qat-btn.save {
    margin: 0 3px 0 4px;
}

.qat-btn.redo {
    margin-left: 4px;
}

.qat-btn .bar {
    width: 7px;
    height: 1px;
    background: #111;
}

.win-btns {
    display: flex;
    justify-content: flex-end;
    padding-right: 3px;
}

.win-btns button {
    width: 58px;
    padding-top: 7px;
    display: flex;
    justify-content: center;
}

/* tabs */
.tabs {
    display: flex;
    height: 31px;
    flex: none;
    border-bottom: 1px solid #b6babf;
}

.tab {
    height: 31px;
    padding: 0 14px 2px;
    color: #444;
}

.tab.file {
    width: 70px;
    height: 30px;
    margin-right: 3px;
    color: #fff;
    background: radial-gradient(ellipse at 50% 100%, #4a94e8, #2a60bd 70%);
    border: 1px solid #1f4f9e;
    border-radius: 3px 3px 0 0;
}

.tab.active {
    padding: 0 13px 2px;
    background: #fff;
    border: 1px solid #b6babf;
    border-bottom: 0;
    border-radius: 3px 3px 0 0;
}

.tab-tools {
    margin-left: auto;
    display: flex;
    align-items: center;
    gap: 12px;
    padding: 0 4px 2px 0;
}

/* ribbon */
.ribbon {
    position: relative;
    display: flex;
    height: 118px;
    flex: none;
    background: linear-gradient(#fff 0%, #fdfdfd 50%, #e8ebef 100%);
    border-bottom: 2px solid #8f939a;
}

.group {
    display: flex;
    flex-direction: column;
    justify-content: space-between;
    padding: 0 4px;
    border-right: 1px solid #bcc1c8;
}

.tools {
    display: flex;
}

.tool {
    width: 50px;
    padding-top: 8px;
    display: flex;
    flex-direction: column;
    align-items: center;
}

.tool.wide {
    width: 65px;
}

.tool.smart {
    width: 73px;
}

.tool svg {
    width: 32px;
    height: 32px;
    overflow: visible;
}

.tool span {
    margin-top: 8px;
    line-height: 20px;
}

.tool .caret {
    margin-top: 8px;
}

.ic-a {
    font-family: "Liberation Serif", serif;
    font-weight: 700;
}

.slant {
    font-style: italic;
}

.small-tools {
    display: flex;
    flex-direction: column;
    gap: 6px;
    padding: 5px 2px 0 5px;
}

.small-tool {
    display: flex;
    align-items: center;
    gap: 4px;
    line-height: 20px;
}

.small-tool svg {
    width: 16px;
    height: 16px;
}

.small-tool .caret {
    margin-left: 2px;
}

.group h2 {
    text-align: center;
    line-height: 24px;
    color: #687080;
}

.gauge {
    position: absolute;
    top: 0;
    right: 0;
    width: 11px;
    height: 64px;
    border: 2px solid #777;
    border-radius: 6px;
    padding: 28px 1px 1px;
    background: #fff;
}

.gauge i {
    display: block;
    height: 100%;
    border-radius: 3px;
    background: #ff7f1a;
}

/* workspace */
.workspace {
    display: flex;
    flex: 1;
    min-height: 0;
    background: linear-gradient(#cdd1d6, #b8bbc0);
}

.left-rail {
    width: 28px;
    padding-top: 2px;
    background: #cdd1d7;
}

.tab-stop {
    height: 27px;
    padding: 4px;
    border: 1px solid #858a94;
}

.tab-stop span {
    display: flex;
    align-items: center;
    justify-content: center;
    height: 17px;
    background: #f7f7f7;
    border: 1px solid #858a94;
}

.v-ruler {
    width: 17px;
    height: 442px;
    margin-left: 5px;
    border: solid #858a94;
    border-width: 0 1px 1px;
    background: linear-gradient(#f7f7f7 315px, #858a94 315px, #858a94 316px, #c9cdd2 316px);
}

.v-ruler span {
    display: flex;
    align-items: center;
    justify-content: center;
    height: 26px;
    padding-bottom: 5px;
    writing-mode: sideways-lr;
    font: 12px "Liberation Sans", sans-serif;
    color: #555;
    background: linear-gradient(#777, #777) center 24px / 5px 1px no-repeat;
}

.v-ruler span:last-child {
    background: none;
}

.canvas {
    flex: 1;
    min-width: 0;
    display: flex;
    flex-direction: column;
    align-items: center;
}

.ruler-row {
    position: relative;
    width: 995px;
    height: 29px;
    padding-top: 7px;
    flex: none;
}

.h-ruler {
    display: flex;
    height: 17px;
    border: 1px solid #858a94;
    background: linear-gradient(to right, transparent 150px, #f7f7f7 150px, #f7f7f7 842px, transparent 842px);
}

.h-ruler span {
    flex: none;
    width: 35px;
    display: flex;
    align-items: center;
    justify-content: center;
    font: 12px/14px "Liberation Sans", sans-serif;
    color: #555;
    background:
        linear-gradient(#666, #666) 8px center / 1px 6px no-repeat,
        linear-gradient(#666, #666) 26px center / 1px 6px no-repeat;
}

.h-ruler span:first-child {
    margin-left: -8px;
}

.h-ruler span:last-child {
    width: 24px;
    justify-content: flex-end;
}

.ruler-ticks {
    height: 3px;
    margin: 1px 162px 0 185px;
    background: repeating-linear-gradient(to right, #666 0, #666 1px, transparent 1px, transparent 35px);
}

.indent-left,
.indent-right {
    position: absolute;
    top: 3px;
    left: 145px;
}

.indent-right {
    left: 837px;
}

.pages {
    flex: 1;
    min-height: 0;
    overflow: hidden;
    padding: 0 20px;
    display: flex;
    flex-direction: column;
    gap: 18px;
}

.page {
    position: relative;
    width: 993px;
    flex: none;
    background: #fff;
    box-shadow: 2px 2px 8px rgba(60, 66, 76, 0.7), -1px 0 6px rgba(60, 66, 76, 0.5);
}

.page p {
    margin-left: 151px;
    font: 300 23px/52px "Liberation Serif", "Noto Sans CJK SC", serif;
    color: #000;
    white-space: nowrap;
}

.page .full {
    width: 691px;
    text-align-last: justify;
}

.mark {
    display: inline-block;
    width: 12px;
    height: 12px;
}

.page-one {
    margin-top: -13px;
    height: 449px;
}

.corners {
    display: flex;
    justify-content: space-between;
    padding: 0 120px;
}

.corners i {
    width: 31px;
    height: 31px;
    border: 0 solid #aaa;
}

.corners.bottom {
    padding-top: 16px;
}

.corners.bottom i {
    border-top-width: 1px;
}

.corners.top i {
    border-bottom-width: 1px;
}

.corners i:first-child {
    border-right-width: 1px;
}

.corners i:last-child {
    border-left-width: 1px;
}

.page-head {
    display: flex;
    justify-content: center;
    height: 90px;
    padding: 74px 0 0 6px;
}

.page-two {
    height: 600px;
}

/* vertical scroll bar */
.scroll {
    width: 21px;
    display: flex;
    flex-direction: column;
    align-items: center;
    padding-top: 5px;
    background: #dbdfe8;
}

.split {
    width: 10px;
    height: 2px;
    margin-bottom: 2px;
    background: #777b83;
}

.ruler-toggle {
    width: 21px;
    height: 21px;
    padding: 2px;
    border: 1px solid #858a94;
}

.scroll button:not(.ruler-toggle) {
    height: 20px;
    flex: none;
}

.track {
    flex: 1;
    width: 100%;
    padding-top: 170px;
}

.thumb {
    height: 26px;
    display: flex;
    flex-direction: column;
    align-items: center;
    justify-content: center;
    gap: 1px;
    background: linear-gradient(to right, #fff, #d7dce6);
    border: 1px solid #858a94;
    border-radius: 2px;
}

.thumb i {
    width: 8px;
    height: 1px;
    background: #666;
}

.browse {
    width: 100%;
    height: 64px;
    display: flex;
    flex-direction: column;
    align-items: center;
    justify-content: space-around;
    padding-bottom: 3px;
    border-top: 1px solid #b4b8c0;
}

/* status bar */
.status {
    display: flex;
    align-items: center;
    height: 27px;
    flex: none;
    border-top: 2px solid #9196a3;
    background: linear-gradient(#e4e7ec, #bbc0c6);
    color: #3a3a3a;
}

.stat {
    display: flex;
    align-items: center;
    height: 25px;
    padding: 0 11px 2px 9px;
    border-right: 1px solid #8f949c;
}

.lang {
    gap: 14px;
}

.views {
    display: flex;
    margin-left: auto;
    padding-left: 4px;
    border-left: 1px solid #8f949c;
}

.view {
    display: flex;
    align-items: center;
    justify-content: center;
    width: 23px;
    height: 24px;
}

.view.on {
    background: #ffd768;
    border: 1px solid #c28a30;
    border-radius: 2px;
}

.view svg {
    width: 16px;
    height: 16px;
}

.zoom-label {
    margin: 0 8px 0 9px;
    padding-bottom: 2px;
}

.round {
    padding-bottom: 2px;
}

#zoom {
    appearance: none;
    width: 125px;
    height: 20px;
    margin: 0;
    background: linear-gradient(#8c929c, #8c929c) center / 100% 1px no-repeat;
}

#zoom::-webkit-slider-thumb {
    appearance: none;
    width: 10px;
    height: 16px;
    background: #f7f8fa;
    border: 1px solid #777e88;
    border-radius: 1px 1px 5px 5px;
}

.round:last-child {
    margin-right: 4px;
}

/* taskbar */
.taskbar {
    position: relative;
    display: flex;
    align-items: center;
    height: 50px;
    flex: none;
    color: #111;
    background: linear-gradient(to right, #d6d5d4 0%, #d4d3d3 31%, #e2d2cf 36%, #e8dad1 44%, #e6d7cd 60%, #e3cfcd 76%, #d5d3d3 86%, #e0cfcd 92%, #d4d0d0 100%);
}

.start {
    width: 61px;
    display: flex;
    justify-content: center;
}

.search {
    display: flex;
    align-items: center;
    gap: 13px;
    width: 428px;
    height: 48px;
    padding-left: 13px;
    background: #fff;
    border: 1px solid #ccc;
}

.search input {
    flex: 1;
    min-width: 0;
    border: 0;
    padding: 0;
    outline: 0;
    font-family: inherit;
    font-size: 19px;
}

.search input::placeholder {
    color: #333;
}

.app-btn {
    display: flex;
    align-items: center;
    justify-content: center;
    width: 62px;
    height: 50px;
}

.app-btn svg {
    width: 30px;
    height: 30px;
}

.open {
    background: linear-gradient(#0a78d7, #0a78d7) center bottom / 51px 3px no-repeat;
}

.stacked {
    background:
        linear-gradient(#6aa8e0, #6aa8e0) 47px bottom / 10px 3px no-repeat,
        linear-gradient(#0a78d7, #0a78d7) center bottom / 51px 3px no-repeat;
}

.current {
    background: linear-gradient(#0a78d7, #0a78d7) center bottom / 100% 3px no-repeat #f4f0ed;
}

.tray {
    display: flex;
    align-items: center;
    gap: 10px;
    height: 50px;
    margin-left: auto;
}

.ime {
    width: 20px;
    height: 20px;
    line-height: 18px;
    text-align: center;
    background: #fff;
    border: 1px solid #333;
    margin-right: 17px;
}

.power text {
    font-family: "Open Sans", sans-serif;
}

.clock {
    display: flex;
    flex-direction: column;
    align-items: center;
    margin-left: 3px;
    font-size: 16px;
    line-height: 23px;
}

.notice {
    position: relative;
    margin-left: 14px;
}

.notice b {
    position: absolute;
    left: 9px;
    top: 9px;
    width: 20px;
    height: 20px;
    line-height: 18px;
    text-align: center;
    border: 1px solid #777;
    border-radius: 50%;
    background: #ddd5d5;
}

.show-desktop {
    width: 6px;
    height: 50px;
    margin-left: 15px;
    border-left: 1px solid #aaa;
}

.watermark {
    position: absolute;
    right: 10px;
    bottom: 7px;
    font-size: 15px;
    color: rgba(255, 255, 255, 0.7);
    text-shadow: 0 0 1px rgba(90, 90, 90, 0.7);
}

/* dialog */
.dialog {
    position: absolute;
    left: calc(50% - 315px);
    top: 294px;
    width: 629px;
    background: #f0f0f0;
    border: 1px solid #666;
    box-shadow: 0 4px 22px rgba(0, 0, 0, 0.35);
    color: #000;
    font-family: "Noto Sans CJK SC", sans-serif;
    font-weight: 300;
}

.dialog-title {
    display: flex;
    align-items: center;
    height: 31px;
    padding: 0 2px 2px 3px;
    background: #fff;
}

.dialog-title h2 {
    flex: 1;
}

.dialog-title button {
    width: 57px;
    display: flex;
    justify-content: center;
    font-size: 16px;
}

.dialog-body {
    display: flex;
    gap: 14px;
    padding: 5px 9px 0;
}

.field-label {
    display: block;
    height: 22px;
    line-height: 20px;
    white-space: nowrap;
}

.listbox {
    display: flex;
    width: 449px;
    height: 304px;
    padding: 1px;
    background: #fff;
    border: 1px solid #828790;
}

.listbox ul {
    flex: 1;
    list-style: none;
}

.listbox li {
    padding-left: 1px;
    line-height: 15px;
}

.listbox .selected {
    color: #fff;
    background: #0078d7;
    outline: 1px dotted #e08030;
    outline-offset: -1px;
}

.list-scroll {
    width: 22px;
    display: flex;
    flex-direction: column;
    align-items: center;
    justify-content: space-between;
    padding: 7px 0;
    background: #f0f0f0;
}

.options {
    flex: 1;
    display: flex;
    flex-direction: column;
}

.combo {
    position: relative;
}

.combo select {
    appearance: none;
    width: 100%;
    height: 25px;
    padding: 0 4px 2px;
    font: inherit;
    color: #000;
    background: #fff;
    border: 1px solid #adadad;
    border-radius: 0;
}

.combo-arrow {
    position: absolute;
    top: 0;
    right: 0;
    width: 22px;
    height: 25px;
    display: flex;
    align-items: center;
    justify-content: center;
    background: #e1e1e1;
    border: 1px solid #adadad;
    pointer-events: none;
}

.check {
    display: flex;
    align-items: center;
    gap: 5px;
    margin-top: auto;
    line-height: 18px;
}

.check input {
    appearance: none;
    width: 16px;
    height: 16px;
    margin: 0;
    border: 1px solid #333;
    background: #fff url("data:image/svg+xml,%3Csvg xmlns='http://www.w3.org/2000/svg' width='14' height='14'%3E%3Cpath d='M2 7l3 4 7-8' fill='none' stroke='%23222' stroke-width='1.500'/%3E%3C/svg%3E") center no-repeat;
}

.dialog-btns {
    display: flex;
    gap: 15px;
    padding: 13px 10px 9px 9px;
}

.btn {
    width: 112px;
    height: 25px;
    background: #e1e1e1;
    border: 1px solid #adadad;
}

.set-default {
    width: 125px;
    margin-right: auto;
}

.ok {
    border: 2px solid #0078d7;
}
```
